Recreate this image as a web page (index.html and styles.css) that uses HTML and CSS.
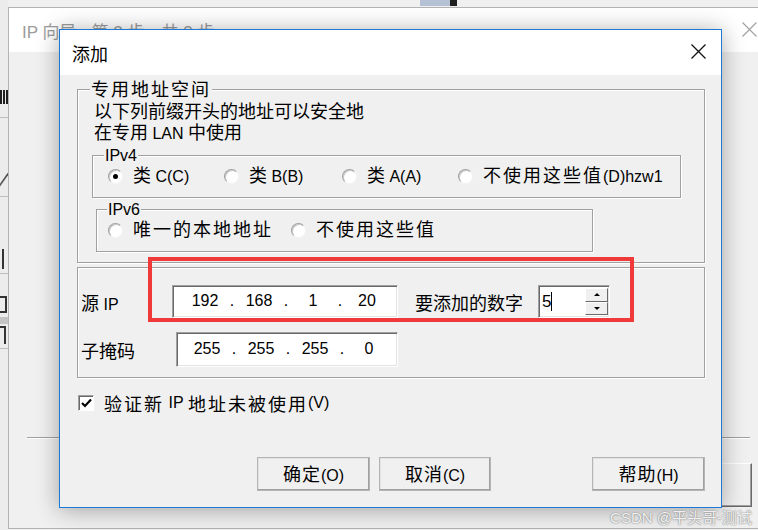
FILE: index.html
```html
<!DOCTYPE html>
<html lang="zh-CN">
<head>
    <meta charset="UTF-8">
    <title>添加</title>
    <link rel="stylesheet" href="styles.css">
</head>
<body>

<div class="desk">
    <div class="edge">
        <div class="edge-bars"></div>
        <div class="edge-line l1"></div>
        <div class="edge-mark m1"></div>
        <div class="edge-line l2"></div>
        <div class="edge-mark m2"></div>
        <div class="edge-line l3"></div>
        <div class="edge-mark m3"></div>
        <div class="edge-bar"></div>
        <div class="edge-mark m4"></div>
        <div class="edge-line l4"></div>
    </div>
    <div class="peek"></div>

    <section class="wizard">
        <header class="wizard-bar">
            <h1>IP 向导 - 第 2 步，共 3 步</h1>
            <svg class="wizard-x" width="15" height="15" viewBox="0 0 15 15">
                <path d="M0.5 0.5L14.5 14.5M14.5 0.5L0.5 14.5" stroke="#a3a3a3" stroke-width="1.2"/>
            </svg>
        </header>
        <div class="wizard-body">
            <div class="wizard-rule"></div>
            <div class="wizard-btn"></div>
        </div>
    </section>

    <section class="dlg">
        <header class="dlg-bar">
            <h2 class="zh">添加</h2>
            <button class="dlg-x">
                <svg width="15" height="15" viewBox="0 0 15 15">
                    <path d="M0.5 0.5L14.5 14.5M14.5 0.5L0.5 14.5" stroke="#111" stroke-width="1.3"/>
                </svg>
            </button>
        </header>

        <div class="dlg-body">
            <div class="grp grp-space">
                <span class="legend zh sp">专用地址空间</span>
                <p class="note zh">以下列前缀开头的地址可以安全地</p>
                <p class="note"><span class="zh">在专用</span> LAN <span class="zh">中使用</span></p>

                <div class="grp grp-v4">
                    <span class="legend">IPv4</span>
                    <div class="opts">
                        <label class="opt"><i class="radio on"></i><span class="zh">类</span>&nbsp;C(C)</label>
                        <label class="opt"><i class="radio"></i><span class="zh">类</span>&nbsp;B(B)</label>
                        <label class="opt"><i class="radio"></i><span class="zh">类</span>&nbsp;A(A)</label>
                        <label class="opt"><i class="radio"></i><span class="zh sp">不使用这些值</span>(D)hzw1</label>
                    </div>
                </div>

                <div class="grp grp-v6">
                    <span class="legend">IPv6</span>
                    <div class="opts">
                        <label class="opt"><i class="radio"></i><span class="zh sp">唯一的本地地址</span></label>
                        <label class="opt"><i class="radio"></i><span class="zh sp">不使用这些值</span></label>
                    </div>
                </div>
            </div>

            <div class="grp grp-ip">
                <div class="row row-src">
                    <span class="lbl"><span class="zh">源</span> IP</span>
                    <div class="ip">
                        <span>192</span><b>.</b><span>168</span><b>.</b><span>1</span><b>.</b><span>20</span>
                    </div>
                    <span class="zh add-lbl">要添加的数字</span>
                    <div class="spin">
                        <span class="spin-val">5</span><span class="caret"></span>
                        <div class="spin-btns">
                            <span class="up"></span>
                            <span class="down"></span>
                        </div>
                    </div>
                </div>
                <div class="row row-mask">
                    <span class="lbl zh">子掩码</span>
                    <div class="ip">
                        <span>255</span><b>.</b><span>255</span><b>.</b><span>255</span><b>.</b><span>0</span>
                    </div>
                </div>
            </div>

            <label class="verify">
                <i class="check">
                    <svg width="11" height="10" viewBox="0 0 11 10">
                        <path d="M1 5L4 8L10 1.5" fill="none" stroke="#000" stroke-width="2.2"/>
                    </svg>
                </i>
                <span class="zh sp">验证新</span>&nbsp;IP&nbsp;<span class="zh sp">地址未被使用</span>(V)
            </label>

            <div class="actions">
                <button class="btn btn-ok"><span class="zh">确定</span>(O)</button>
                <button class="btn btn-cancel"><span class="zh">取消</span>(C)</button>
                <button class="btn btn-help"><span class="zh">帮助</span>(H)</button>
            </div>
        </div>
    </section>

    <div class="mark"></div>
    <div class="watermark">CSDN @平头哥-测试</div>
</div>

</body>
</html>
```

FILE: styles.css
```css
body {
    margin: 0;
    padding: 0;
    background-color: #f0f0f0;
    font-family: "Liberation Sans", "Noto Sans CJK SC", sans-serif;
    font-size: 16px;
    color: #000;
}

.desk {
    position: relative;
    width: 758px;
    height: 530px;
    overflow: hidden;
    background-color: #f0f0f0;
}

.zh {
    font-size: 18px;
}

.sp {
    letter-spacing: 2px;
}

/* window peeking out on the left */

.edge {
    position: absolute;
    left: 0;
    top: 0;
    width: 8px;
    height: 530px;
    overflow: hidden;
    background-color: #ececec;
}

.edge-bars {
    margin-top: 90px;
    height: 14px;
    background: repeating-linear-gradient(90deg, #1e1e1e 0 2px, transparent 2px 3px);
}

.edge-line {
    height: 1px;
    background-color: #bdbdbd;
}

.edge-line.l1 { margin-top: 13px; }
.edge-line.l2 { margin-top: 8px; }
.edge-line.l3 { margin-top: 4px; }
.edge-line.l4 { margin-top: 4px; }

.edge-mark {
    height: 20px;
    box-sizing: border-box;
}

.edge-mark.m1 {
    margin-top: 50px;
    border-right: 2px solid #555;
    transform: skewX(-35deg);
    width: 6px;
}

.edge-mark.m2 {
    margin-top: 52px;
    width: 4px;
    border-right: 2px solid #333;
}

.edge-mark.m3 {
    margin-top: 22px;
    border-top: 2px solid #333;
    border-bottom: 2px solid #333;
    border-right: 2px solid #333;
    width: 7px;
    height: 17px;
}

.edge-bar {
    height: 7px;
    margin-top: 4px;
    background-color: #c4c4c4;
}

.edge-mark.m4 {
    border-top: 2px solid #333;
    border-right: 2px solid #333;
    width: 6px;
    height: 18px;
    margin-top: 2px;
}

.peek {
    position: absolute;
    left: 420px;
    top: 0;
    width: 30px;
    height: 6px;
    background-color: #b5c2d6;
    border-right: 7px solid #202020;
}

/* wizard window behind the dialog */

.wizard {
    position: absolute;
    left: 8px;
    top: 7px;
    width: 790px;
    height: 522px;
    box-sizing: border-box;
    border: 1px solid #b4b4b4;
    background-color: #f0f0f0;
    display: flex;
    flex-direction: column;
}

.wizard-bar {
    height: 44px;
    flex: none;
    background-color: #fff;
    display: flex;
    align-items: center;
    padding-left: 13px;
}

.wizard-bar h1 {
    margin: 0;
    flex: 1;
    font-weight: normal;
    font-size: 17px;
    color: #9c9c9c;
}

.wizard-x {
    margin: 0 40px 2px 0;
}

.wizard-body {
    padding-top: 385px;
}

.wizard-rule {
    margin-left: 18px;
    width: 723px;
    height: 1px;
    background-color: #a0a0a0;
    border-bottom: 1px solid #fff;
}

.wizard-btn {
    margin: 24px 0 0 633px;
    width: 110px;
    height: 44px;
    box-sizing: border-box;
    border: 1px solid;
    border-color: #fff #696969 #696969 #fff;
    box-shadow: inset -1px -1px #a0a0a0;
}

/* dialog */

.dlg {
    position: absolute;
    left: 59px;
    top: 29px;
    width: 663px;
    height: 479px;
    box-sizing: border-box;
    border: 1px solid #1c7ad6;
    background-color: #f0f0f0;
    box-shadow: 0 2px 22px rgba(0, 0, 0, .33);
    display: flex;
    flex-direction: column;
}

.dlg-bar {
    height: 45px;
    flex: none;
    background-color: #fff;
    display: flex;
    align-items: center;
    padding-left: 12px;
}

.dlg-bar h2 {
    margin: 0;
    flex: 1;
    font-weight: normal;
}

.dlg-x {
    width: 46px;
    height: 45px;
    padding: 0 0 2px 0;
    border: 0;
    background: none;
    display: flex;
    align-items: center;
    justify-content: center;
}

.dlg-body {
    padding: 14px 16px 0 17px;
}

.grp {
    position: relative;
    box-sizing: border-box;
    border: 1px solid #a0a0a0;
    box-shadow: 1px 1px 0 #fff, inset 1px 1px 0 #fff;
}

.legend {
    position: absolute;
    background-color: #f0f0f0;
    padding: 0 1px;
    white-space: nowrap;
}

.grp-space {
    padding: 12px 0 10px 14px;
}

.grp-space > .legend {
    left: 12px;
    top: -10px;
    line-height: 20px;
}

.note {
    margin: 0 0 0 2px;
    height: 21px;
    line-height: 21px;
    white-space: nowrap;
}

.grp-v4,
.grp-v6 {
    height: 43px;
    margin-top: 11px;
    padding: 10px 0 0 15px;
}

.grp-v4 {
    width: 589px;
}

.grp-v6 {
    width: 497px;
    margin-left: 4px;
    padding-left: 11px;
}

.grp-v4 > .legend,
.grp-v6 > .legend {
    top: -9px;
    line-height: 18px;
}

.grp-v4 > .legend {
    left: 11px;
}

.grp-v6 > .legend {
    left: 10px;
}

.opts {
    display: grid;
    height: 21px;
    align-items: center;
}

.grp-v4 .opts {
    grid-template-columns: 116px 118px 116px auto;
}

.grp-v6 .opts {
    grid-template-columns: 183px auto;
}

.opt {
    display: flex;
    align-items: center;
    white-space: nowrap;
    line-height: 21px;
}

.radio {
    position: relative;
    flex: none;
    width: 15px;
    height: 15px;
    margin-right: 10px;
    box-sizing: border-box;
    border-radius: 50%;
    background-color: #fff;
    border: 1px solid;
    border-color: #a0a0a0 #f4f4f4 #f4f4f4 #a0a0a0;
    box-shadow: inset 1px 1px 0 #c8c8c8;
}

.radio.on::after {
    content: "";
    position: absolute;
    left: 4px;
    top: 4px;
    width: 5px;
    height: 5px;
    border-radius: 50%;
    background-color: #000;
}

.grp-ip {
    margin-top: 4px;
    padding: 17px 0 10px 3px;
}

.row {
    display: flex;
    align-items: center;
    white-space: nowrap;
}

.row-src {
    height: 33px;
}

.row-mask {
    height: 35px;
    margin-top: 14px;
}

.row-src .lbl {
    width: 91px;
}

.row-mask .lbl {
    width: 95px;
}

.ip {
    box-sizing: border-box;
    align-self: stretch;
    background-color: #fff;
    border: 1px solid;
    border-color: #a0a0a0 #fff #fff #a0a0a0;
    box-shadow: inset 1px 1px 0 #696969, inset -1px -1px 0 #e3e3e3;
    display: grid;
    grid-template-columns: 48px 6px 48px 6px 48px 6px 48px;
    align-items: center;
    padding-bottom: 2px;
}

.ip span,
.ip b {
    text-align: center;
    font-weight: normal;
}

.row-src .ip {
    width: 226px;
    padding-left: 8px;
}

.row-mask .ip {
    width: 222px;
    padding-left: 6px;
}

.add-lbl {
    margin-left: 17px;
}

.spin {
    margin-left: 15px;
    width: 72px;
    align-self: stretch;
    box-sizing: border-box;
    background-color: #fff;
    border: 1px solid;
    border-color: #a0a0a0 #fff #fff #a0a0a0;
    box-shadow: inset 1px 1px 0 #696969, inset -1px -1px 0 #e3e3e3;
    display: flex;
    align-items: center;
    padding-left: 3px;
}

.spin-val {
    font-size: 17px;
}

.caret {
    width: 1px;
    height: 19px;
    background-color: #000;
}

.spin-btns {
    margin-left: auto;
    align-self: stretch;
    width: 23px;
    padding: 2px 1px 2px 0;
    display: flex;
    flex-direction: column;
}

.spin-btns span {
    flex: 1;
    background-color: #f0f0f0;
    border: 1px solid;
    border-color: #fff #696969 #696969 #fff;
    display: flex;
    align-items: center;
    justify-content: center;
}

.spin-btns .up::before,
.spin-btns .down::before {
    content: "";
    border: 3px solid transparent;
}

.spin-btns .up::before {
    border-top: 0;
    border-bottom-color: #000;
}

.spin-btns .down::before {
    border-bottom: 0;
    border-top-color: #000;
}

.verify {
    display: flex;
    align-items: center;
    height: 20px;
    margin: 15px 0 0 1px;
    white-space: nowrap;
}

.check {
    flex: none;
    width: 16px;
    height: 16px;
    margin-right: 10px;
    box-sizing: border-box;
    background-color: #fff;
    border: 1px solid;
    border-color: #a0a0a0 #fff #fff #a0a0a0;
    box-shadow: inset 1px 1px 0 #696969;
    display: flex;
    align-items: center;
    justify-content: center;
}

.actions {
    display: flex;
    margin-top: 44px;
    padding-left: 180px;
}

.btn {
    height: 34px;
    width: 113px;
    box-sizing: border-box;
    padding: 0 0 2px 0;
    background-color: #f0f0f0;
    font: inherit;
    color: #000;
    letter-spacing: 0;
    border: 1px solid;
    border-color: #fff #696969 #696969 #fff;
    box-shadow: inset -1px -1px 0 #a0a0a0, inset 1px 1px 0 #e3e3e3;
    outline: 1px solid #b5b5b5;
    outline-offset: -1px;
}

.btn .zh {
    letter-spacing: 1px;
}

.btn-cancel {
    width: 112px;
    margin-left: 9px;
}

.btn-help {
    margin-left: 101px;
}

/* annotation */

.mark {
    position: absolute;
    left: 148px;
    top: 257px;
    width: 486px;
    height: 65px;
    box-sizing: border-box;
    border: 4px solid #f03a3a;
}

.watermark {
    position: absolute;
    right: 6px;
    bottom: 3px;
    font-size: 15px;
    line-height: 18px;
    color: rgba(255, 255, 255, .9);
    text-shadow: 0 0 1px #7a7a7a, 0 0 2px #9a9a9a;
}
```
